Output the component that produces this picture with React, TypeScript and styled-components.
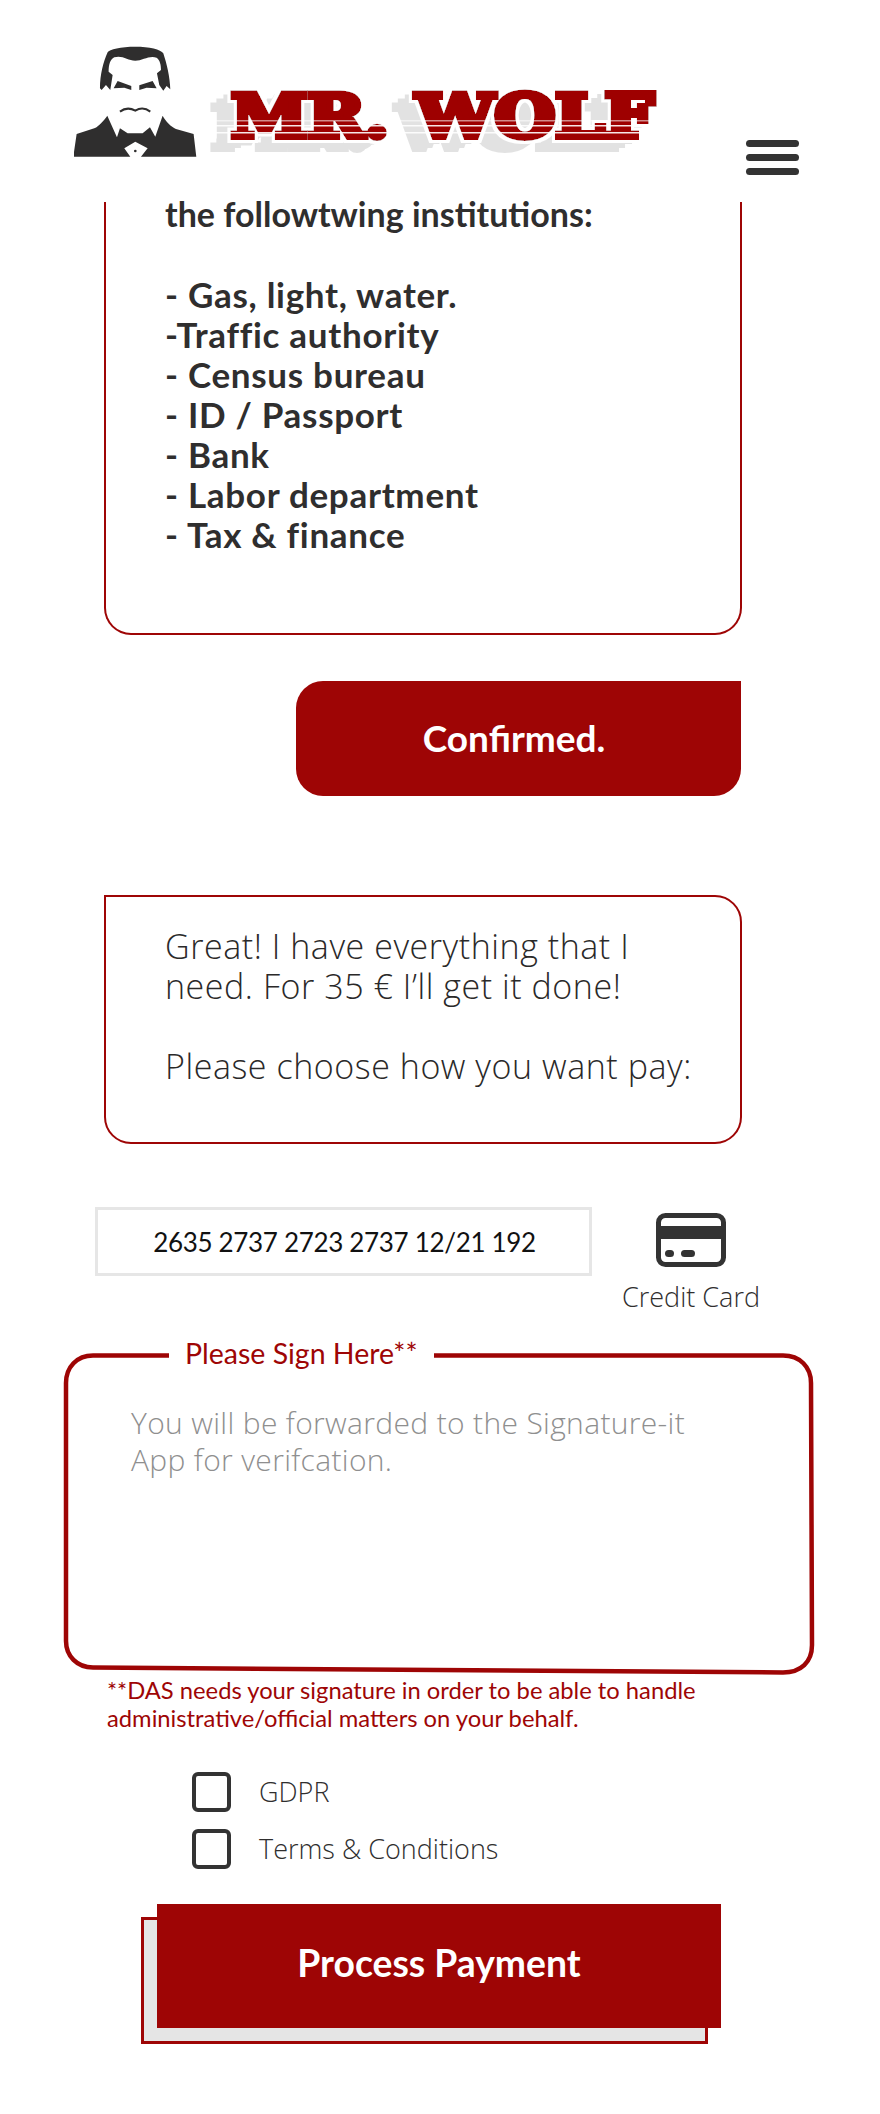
import React from "react";
import styled, { createGlobalStyle } from "styled-components";

const RED = "#9e0505";
const INK = "#2f2e2e";
const FONT = `Lato, "Open Sans", "Liberation Sans", sans-serif`;
const LIGHT = `"Open Sans", Lato, "Liberation Sans", sans-serif`;

const Global = createGlobalStyle`
  html, body { margin: 0; padding: 0; background: #fff; }
  body { font-family: ${FONT}; color: ${INK}; }
  *, *::before, *::after { box-sizing: border-box; }
`;

const Page = styled.div`
  width: 880px;
  height: 2114px;
  overflow: hidden;
`;

const Header = styled.header`
  height: 202px;
  display: flex;
  align-items: flex-start;
  padding: 46px 81px 0 74px;
`;

const Logo = styled.svg`
  display: block;
  width: 590px;
  height: 115px;
  flex: none;
`;

const Burger = styled.div`
  margin: 94px 0 0 auto;
  width: 53px;
  display: flex;
  flex-direction: column;
  gap: 7px;
`;

const BurgerBar = styled.span`
  display: block;
  height: 7px;
  border-radius: 4px;
  background: #333;
`;

const Bubble = styled.section<{ $variant: "clipped" | "open" }>`
  display: flow-root;
  margin: 0 138px 0 104px;
  width: 638px;
  border: 2px solid ${RED};
  border-top: ${(p) => (p.$variant === "clipped" ? "0" : `2px solid ${RED}`)};
  border-radius: ${(p) => (p.$variant === "clipped" ? "0 0 27px 27px" : "0 27px 27px 27px")};
  padding: ${(p) => (p.$variant === "clipped" ? "0 20px 79px 59px" : "29px 10px 56px 59px")};
  font-size: 32px;
  line-height: 40px;
  white-space: pre-line;
`;

const LeadText = styled.div`
  margin-top: -8px;
  font-size: 34px;
  font-weight: 700;
`;

const ListText = styled.div`
  margin-top: 40px;
  font-size: 35px;
  font-weight: 700;
  letter-spacing: 0.7px;
`;

const LightText = styled.div`
  font-family: ${LIGHT};
  font-size: 34px;
  font-weight: 300;
  letter-spacing: 0.55px;
  color: #2a2929;
`;

const ConfirmButton = styled.button`
  display: block;
  margin: 46px 0 0 296px;
  width: 445px;
  height: 115px;
  border: 0;
  border-radius: 27px 0 27px 27px;
  background: ${RED};
  color: #fff;
  font: 700 37px ${FONT};
  text-align: center;
  padding: 0 9px 2px 0;
`;

const SpacedBubble = styled(Bubble)`
  margin-top: 99px;
`;

const PayRow = styled.div`
  display: flex;
  align-items: flex-start;
  margin: 63px 0 0 95px;
`;

const CardInput = styled.div`
  width: 497px;
  height: 69px;
  border: 3px solid #e6e6e6;
  display: flex;
  align-items: center;
  justify-content: center;
  padding-left: 2px;
  font-size: 26px;
  letter-spacing: -0.32px;
  font-weight: 400;
  color: #111;
`;

const CardOption = styled.div`
  margin-left: 30px;
  width: 138px;
  padding-top: 6px;
  display: flex;
  flex-direction: column;
  align-items: center;
`;

const CardLabel = styled.div`
  margin-top: 14px;
  font-family: ${LIGHT};
  font-size: 27px;
  font-weight: 300;
  line-height: 32px;
  white-space: nowrap;
`;

const SignBox = styled.div`
  position: relative;
  margin: 40px 0 0 63px;
  width: 754px;
  height: 322px;
  padding: 51px 40px 0 68px;
`;

const SignFrame = styled.svg`
  position: absolute;
  left: 0;
  top: 0;
  width: 754px;
  height: 322px;
`;

const SignLegend = styled.div`
  position: absolute;
  left: 106px;
  top: -17px;
  padding: 0 16px;
  background: #fff;
  color: ${RED};
  font-size: 28.5px;
  line-height: 34px;
  white-space: nowrap;
`;

const Placeholder = styled.div`
  font-family: ${LIGHT};
  font-size: 30px;
  letter-spacing: 0.33px;
  font-weight: 300;
  line-height: 37px;
  color: #8f8f8f;
`;

const Note = styled.p`
  margin: 1px 0 0 107px;
  width: 640px;
  font-size: 23.75px;
  line-height: 28px;
  color: ${RED};
`;

const Checks = styled.div`
  margin: 40px 0 0 192px;
  display: flex;
  flex-direction: column;
  gap: 17px;
`;

const CheckRow = styled.label`
  display: flex;
  align-items: center;
  gap: 28px;
  height: 40px;
  font-family: ${LIGHT};
  font-size: 27px;
  font-weight: 300;
  line-height: 38px;
`;

const CheckBox = styled.span`
  display: block;
  width: 39px;
  height: 40px;
  border: 4px solid #333;
  border-radius: 6px;
`;

const PayWrap = styled.div`
  position: relative;
  isolation: isolate;
  margin: 35px 0 0 157px;
  width: 564px;
  height: 124px;

  &::before {
    content: "";
    position: absolute;
    z-index: -1;
    left: -16px;
    top: 13px;
    width: 567px;
    height: 127px;
    background: #e5e5e5;
    border: 3px solid ${RED};
  }
`;

const PayButton = styled.button`
  display: block;
  width: 100%;
  height: 100%;
  border: 0;
  background: ${RED};
  color: #fff;
  font: 700 37.3px ${FONT};
  padding: 0 0 8px;
`;

const CardIcon = () => (
  <svg width="70" height="54" viewBox="0 0 70 54" aria-hidden="true">
    <rect x="2.5" y="2.5" width="65" height="49" rx="7" fill="none" stroke="#333" strokeWidth="5" />
    <rect x="3" y="13" width="64" height="13" fill="#333" />
    <rect x="9" y="37" width="9" height="7" rx="3.5" fill="#333" />
    <rect x="25" y="37" width="14" height="7" rx="3.5" fill="#333" />
  </svg>
);

const LogoWord = styled.text`
  font-family: "DejaVu Serif", serif;
  font-weight: 700;
  font-size: 59px;
  fill: ${RED};
  stroke: ${RED};
  stroke-width: 6px;
  stroke-linejoin: miter;
  filter: url(#logoFx);
`;

const LogoMark = () => (
  <Logo viewBox="0 0 590 115" aria-label="Mr. Wolf">
    <defs>
      <filter id="logoFx" filterUnits="userSpaceOnUse" x="100" y="0" width="490" height="115">
        <feMorphology in="SourceAlpha" operator="dilate" radius="3" result="fat" />
        <feFlood floodColor="#fff" result="white" />
        <feComposite in="white" in2="fat" operator="in" result="halo" />
        <feFlood floodColor="#e2e2e2" result="grey" />
        <feOffset in="SourceAlpha" dx="-7" dy="4" result="o1" />
        <feOffset in="SourceAlpha" dx="-14" dy="8" result="o2" />
        <feOffset in="SourceAlpha" dx="-20" dy="12" result="o3" />
        <feComposite in="grey" in2="o1" operator="in" result="s1" />
        <feComposite in="grey" in2="o2" operator="in" result="s2" />
        <feComposite in="grey" in2="o3" operator="in" result="s3" />
        <feMerge>
          <feMergeNode in="s3" />
          <feMergeNode in="s2" />
          <feMergeNode in="s1" />
          <feMergeNode in="halo" />
          <feMergeNode in="SourceGraphic" />
        </feMerge>
      </filter>
    </defs>
    <g transform="translate(-24.7 -26) scale(0.3333)" fill="#2f2e2e">
      <path d="M152 205C152 165 162 125 175 97C180 88 215 80 258 80C300 80 335 88 342 100C352 130 362 170 363 208L352 198L342 212L330 195L323 160L335 150C335 135 332 120 322 113C300 105 280 122 258 122C235 122 220 105 195 112C182 118 178 135 178 155L190 165L183 210L170 195L157 210Z" />
      <path d="M205 183L246 198L246 210L225 203L193 205Z" />
      <path d="M270 196L310 183L322 205L292 203L270 210Z" />
      <path d="M212 275C225 265 240 262 258 272C275 262 290 265 303 275" fill="none" stroke="#2f2e2e" strokeWidth="6" />
      <path d="M72 410L82 342L135 325C150 318 165 300 174 287L203 352L212 325L235 340L280 340L302 322L318 350L340 287C350 305 365 320 380 327L433 342L441 410L275 410L295 385L258 365L225 385L243 410Z" />
      <circle cx="258" cy="393" r="4" />
    </g>
    <LogoWord x={157} y={91} textLength={158} lengthAdjust="spacingAndGlyphs">MR.</LogoWord>
    <LogoWord x={342} y={91} textLength={238} lengthAdjust="spacingAndGlyphs">WOLF</LogoWord>
    <g fill="#fff">
      <rect x="136" y="74" width="445" height="1.5" opacity="0.55" />
      <rect x="136" y="79" width="445" height="1.5" opacity="0.9" />
      <rect x="136" y="86" width="445" height="1.5" opacity="0.9" />
    </g>
  </Logo>
);

const listText = `- Gas, light, water.
-Traffic authority
- Census bureau
- ID / Passport
- Bank
- Labor department
- Tax & finance`;

const secondText = `Great! I have everything that I
need. For 35 € I’ll get it done!

Please choose how you want pay:`;

export default function App() {
  return (
    <Page>
      <Global />
      <Header>
        <LogoMark />
        <Burger>
          <BurgerBar />
          <BurgerBar />
          <BurgerBar />
        </Burger>
      </Header>
      <Bubble $variant="clipped">
        <LeadText>the followtwing institutions:</LeadText>
        <ListText>{listText}</ListText>
      </Bubble>
      <ConfirmButton>Confirmed.</ConfirmButton>
      <SpacedBubble $variant="open">
        <LightText>{secondText}</LightText>
      </SpacedBubble>
      <PayRow>
        <CardInput>2635 2737 2723 2737 12/21 192</CardInput>
        <CardOption>
          <CardIcon />
          <CardLabel>Credit Card</CardLabel>
        </CardOption>
      </PayRow>
      <SignBox>
        <SignFrame viewBox="0 0 754 322" aria-hidden="true">
          <path
            d="M30 2.5H720C737 2.5 748 14 748 30L749 292C749 309 738 319.5 720 319.5L30 314.5C14 314.5 3 303 3 288V30C3 14 14 2.5 30 2.5Z"
            fill="none"
            stroke={RED}
            strokeWidth="4.5"
          />
        </SignFrame>
        <SignLegend>Please Sign Here**</SignLegend>
        <Placeholder>
          You will be forwarded to the Signature-it
          <br />
          App for verifcation.
        </Placeholder>
      </SignBox>
      <Note>
        **DAS needs your signature in order to be able to handle
        <br />
        administrative/official matters on your behalf.
      </Note>
      <Checks>
        <CheckRow>
          <CheckBox />
          GDPR
        </CheckRow>
        <CheckRow>
          <CheckBox />
          Terms &amp; Conditions
        </CheckRow>
      </Checks>
      <PayWrap>
        <PayButton>Process Payment</PayButton>
      </PayWrap>
    </Page>
  );
}
